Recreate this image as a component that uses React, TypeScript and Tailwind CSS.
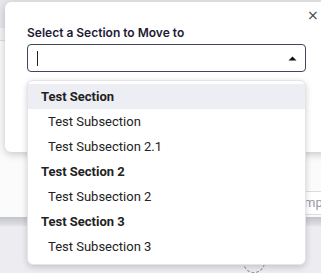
import React from 'react';

const OPTIONS = [
    { label: 'Test Section', heading: true },
    { label: 'Test Subsection', heading: false },
    { label: 'Test Subsection 2.1', heading: false },
    { label: 'Test Section 2', heading: true },
    { label: 'Test Subsection 2', heading: false },
    { label: 'Test Section 3', heading: true },
    { label: 'Test Subsection 3', heading: false },
];

const App: React.FC = () => {
    return (
        <div className="relative w-[321px] h-[273px] overflow-hidden font-['Roboto',sans-serif]">
            {/* page behind the modal */}
            <div className="flex flex-col h-full">
                <div className="h-[32px] bg-[#e7e7ec]"></div>
                <div className="h-[15px] bg-[#f4f4f6] border-b border-[#dedee3]"></div>
                <div className="h-[180px] bg-[#fbfbfc] flex flex-col items-end pt-[150px]">
                    <div className="w-[34px] h-[24px] border border-r-0 border-[#dcdce2] rounded-l-[3px] bg-white text-[13px] text-[#9a9aa4] flex items-center pl-[2px] overflow-hidden whitespace-nowrap">
                        Templ
                    </div>
                </div>
                <div className="h-[10px] bg-gradient-to-b from-[#c3c3cb] to-[#e2e2e8]"></div>
                <div className="flex-1 bg-[#ededf1] flex justify-start pl-[243px] pt-[25px]">
                    <div className="w-[22px] h-[22px] rounded-full border border-dashed border-[#8d8d96]"></div>
                </div>
            </div>

            {/* modal */}
            <div className="absolute left-[5px] top-[2px] w-[340px] h-[150px] bg-white rounded-[6px] shadow-[0_2px_8px_rgba(0,0,0,0.22)] px-[22px] pt-[23px]">
                <button className="absolute left-[302px] top-[6px] text-[#444] text-[14px] leading-none font-['DejaVu_Sans',sans-serif]">×</button>
                <p className="font-['Inter',sans-serif] font-semibold text-[12px] leading-[16px] text-[#1d1b38] w-[279px]">
                    Select a Section to Move to
                </p>
                <div className="mt-[3px] w-[279px] h-[28px] border border-[#44445e] rounded-[4px] flex items-center justify-between pl-[9px] pr-[8px]">
                    <span className="w-[1px] h-[15px] bg-[#222]"></span>
                    <svg width="9" height="5" viewBox="0 0 9 5"><path d="M0.5 4.5 L4.5 0.5 L8.5 4.5 Z" fill="#111" /></svg>
                </div>
            </div>

            {/* dropdown list */}
            <div className="absolute left-[27px] top-[80px] w-[279px] bg-white rounded-[6px] border border-[#e4e4ea] shadow-[0_2px_6px_rgba(0,0,0,0.18)] pt-[3px] pb-[5px]">
                {OPTIONS.map((opt, i) => (
                    <div
                        key={opt.label}
                        className={`h-[25px] flex items-center text-[13px] text-[#222] ${opt.heading ? 'font-bold pl-[13px]' : 'pl-[20px]'} ${i === 0 ? 'bg-[#ededf4]' : ''}`}
                    >
                        {opt.label}
                    </div>
                ))}
            </div>
        </div>
    );
};

export default App;
